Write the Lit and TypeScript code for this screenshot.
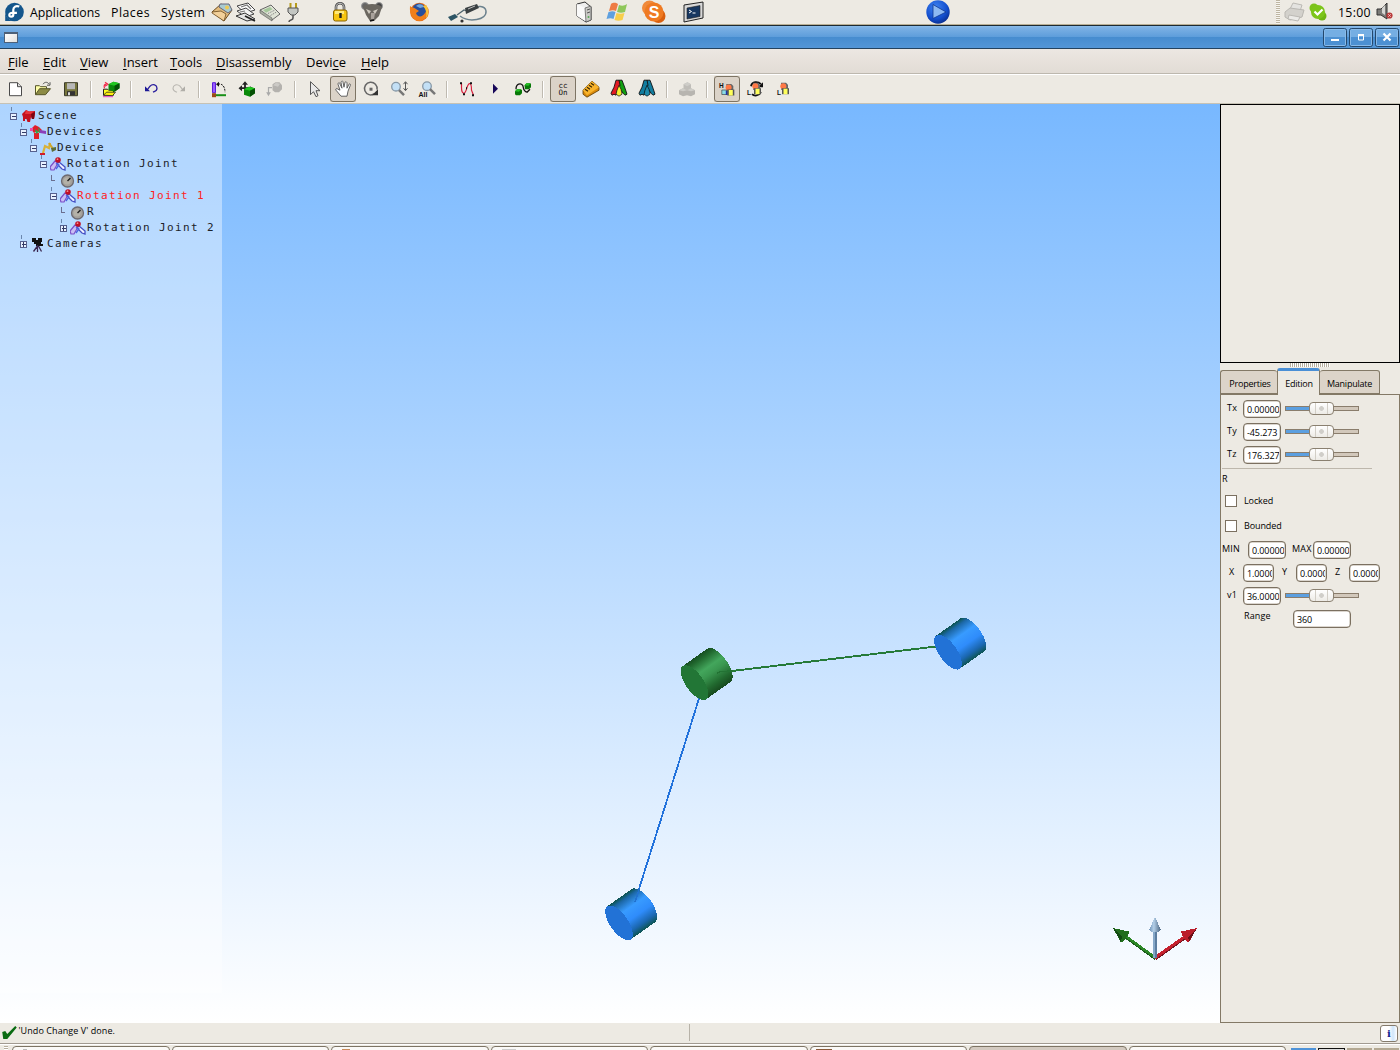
import { LitElement, html, css, svg } from "lit";
import { customElement } from "lit/decorators.js";
import { classMap } from "lit/directives/class-map.js";

/* ---------- desktop panel icons (drawn in 28x24 cells) ---------- */
const panelIcons: Record<string, any> = {
  fedora: svg`<circle cx="14.500" cy="12" r="9.300" fill="#14568c"/><path d="M5.200 21V12a9 9 0 0 0 9 9z" fill="#14568c"/><path d="M19.300 6.600c-3.300-1.500-6 .4-6 3.200v5c0 2.400-3.900 2.500-4 .2-.1-1.900 2-2.300 3.300-2.200h4.300" fill="none" stroke="#fff" stroke-width="2.200"/>`,
  mail: svg`<path d="M4 12l9-8 11 6-8 11z" fill="#e3bb7c" stroke="#6b4a1e"/><path d="M12 4l9 0 3 6-4 3-9-6z" fill="#a9cbd2" stroke="#667"/><path d="M4 12l9-1 5 3-2 7-12-8z" fill="#f2d09a" stroke="#6b4a1e" stroke-width=".8"/><circle cx="19" cy="7.500" r="2" fill="#eecb55"/>`,
  writer: svg`<path d="M5 6l11-3 7 7-10 3z" fill="#fff" stroke="#444"/><path d="M5 11l9-3 8 6-9 3z" fill="#f3f3f3" stroke="#444"/><path d="M4 16l9-3 10 6-8 2z" fill="#e5e5e5" stroke="#333"/><path d="M13 16l10 5" stroke="#222" stroke-width="1.800"/><path d="M9 7l6-2 4 4M8 12l5-1" fill="none" stroke="#777" stroke-width="1.200"/>`,
  calc: svg`<path d="M4 10l11-5 9 9-8 6z" fill="#dfe3d6" stroke="#666"/><path d="M4 10l12 8v3L4 13z" fill="#aaaea2" stroke="#555" stroke-width=".6"/><path d="M7 10l7-3 2.500 2.200-6.500 3.500z" fill="#a5c79b"/><path d="M12 13.500l7-3.500M14.500 15.500l6-3.500" stroke="#888" stroke-dasharray="1.500 1"/>`,
  plug: svg`<path d="M11.500 3v5M17 3v5" stroke="#b59a1c" stroke-width="2"/><path d="M9 8h10v4l-3 3h-4l-3-3z" fill="#c3c6c2" stroke="#555"/><path d="M14 15v3c0 3-4 1-4 4" fill="none" stroke="#555" stroke-width="1.600"/>`,
  lock: svg`<path d="M10 11V7c0-5 8-5 8 0v4" fill="none" stroke="#444" stroke-width="2.600"/><path d="M10 11V7c0-5 8-5 8 0v4" fill="none" stroke="#ddd" stroke-width=".9"/><rect x="7.500" y="10" width="13.500" height="11" rx="2" fill="#f7c512" stroke="#8a6400"/><path d="M9 11h9v3H9z" fill="#ffe97a"/><path d="M14.500 13v5" stroke="#222" stroke-width="2.400"/>`,
  gimp: svg`<circle cx="7" cy="6" r="3.500" fill="#666" stroke="#999"/><circle cx="21" cy="6" r="3.500" fill="#444" stroke="#999"/><path d="M5 7c3-4 15-4 19 0l-3 9-5 5h-4l-4-6z" fill="#6b6760"/><path d="M8 9l5 2-2 3zM20 9l-5 2 2 3z" fill="#cfcac0"/><path d="M13 13h4l-1 6h-3z" fill="#a9a29b"/><path d="M12 21l4-1" stroke="#111" stroke-width="1.500"/>`,
  firefox: svg`<circle cx="14.500" cy="12" r="9.300" fill="#e66a14"/><circle cx="14" cy="10.500" r="7" fill="#254f9d"/><path d="M11 6c3-3 7-2 8 1l-4 1z" fill="#70a5dd"/><path d="M5 6c2 2 4 1 6 3l3 2-3 2c1 4 6 5 9 0l3-3c0 7-4 11-9 11S4 15 5 6z" fill="#ef7f1b"/><path d="M21 5c3 4 3 10 0 13 1-5 0-9-3-12z" fill="#f7c43a"/>`,
  probe: svg`<path d="M12 16c9 7 27 4 26-5-1-6-9-5-13-3" fill="none" stroke="#6c828e" stroke-width="1.500"/><path d="M9 15l7-5 3 1" fill="none" stroke="#4c626c" stroke-width="1.300"/><path d="M0 17l7-3 3 3-7 4z" fill="#2d5565"/><path d="M17 8l12-4 2 4-13 6z" fill="#3a4042"/><path d="M20 9l7-3" stroke="#bbb"/><circle cx="14" cy="21" r="1.600" fill="#333"/>`,
  tower: svg`<path d="M7 4l8-2 6 5v13l-5 2-9-6z" fill="#eee" stroke="#333"/><path d="M15 8v13l-8-5V4z" fill="#fafafa"/><path d="M15 8l6-2v14l-5 2z" fill="#c9c9c6" stroke="#555" stroke-width=".7"/><path d="M17 10l3-1M17 13l3-1" stroke="#555"/><circle cx="18.500" cy="17" r="1" fill="#5a5"/>`,
  windows: svg`<path d="M8 4c3-2 5-1 7 0l-2 7c-2-1-4-1-7 0z" fill="#ee7b44"/><path d="M16 5c3 1 5 1 8-1l-2 8c-3 1-5 1-8 0z" fill="#8fc75a"/><path d="M5.500 12c3-1 5-1 7 0l-2 7c-2-1-4-1-7 0z" fill="#5fa0df"/><path d="M13.500 13c3 1 5 1 8 0l-2 7c-3 1-5 1-8 0z" fill="#f7ce4b"/>`,
  skype: svg`<circle cx="9.500" cy="8" r="7.500" fill="#f08a3c"/><circle cx="18.500" cy="16" r="7" fill="#d9600f"/><circle cx="14" cy="12" r="9.500" fill="#ef7a22"/><text x="14" y="18" text-anchor="middle" font-family="Liberation Sans" font-weight="bold" font-size="16" fill="#fff">S</text>`,
  terminal: svg`<path d="M5 5l19-3v16L5 22z" fill="#d8d8d8" stroke="#222"/><path d="M8 8l13-2.500v11L8 19z" fill="#173761" stroke="#222" stroke-width=".6"/><path d="M10 10l2.500 1.500L10 13M13.500 13h3" fill="none" stroke="#fff"/>`,
  play: svg`<defs><radialGradient id="pb" cx=".4" cy=".3" r=".8"><stop offset="0" stop-color="#3f83f0"/><stop offset=".6" stop-color="#1450cf"/><stop offset="1" stop-color="#08257c"/></radialGradient></defs><circle cx="14" cy="12" r="11.700" fill="url(#pb)"/><path d="M9 4.500l13 7.500-13 6.500z" fill="#8db9f2" stroke="#0e3690" stroke-width=".8"/>`,
  printer: svg`<path d="M9 9l3-6 9 2-2 6z" fill="#e4e3e0" stroke="#bbb9b4"/><path d="M4 12l5-4 14 2-2 7-12 3-5-3z" fill="#d3d1cc" stroke="#b9b7b2"/><path d="M8 15l11 2-2 4-10-2z" fill="#ebeae7" stroke="#bbb9b4"/>`,
  online: svg`<circle cx="10" cy="8" r="4.500" fill="#7cc21c"/><circle cx="18" cy="16" r="4.500" fill="#6fb513"/><circle cx="14" cy="12" r="7" fill="#7cc51a"/><path d="M10.500 11.500l3 3 5-5" fill="none" stroke="#fff" stroke-width="2.200"/>`,
  sound: svg`<path d="M5 9h4l6-6v16l-6-4H5z" fill="#7b7b78" stroke="#333"/><path d="M10 8l3-3v10l-3-2z" fill="#d5d5d2"/><circle cx="17.500" cy="15.500" r="3.100" fill="#b83a3a"/><path d="M16.300 14.300l2.400 2.400m0-2.400l-2.400 2.400" stroke="#f2caca" stroke-width="1"/>`,
};

/* ---------- application toolbar icons (28x28 cells) ---------- */
const cube = (x: number, y: number) => svg`<path d="M${x} ${y + 2.500}l5-2.500 6 1.500v5l-5 3.500-6-2z" fill="#0a8a0a"/><path d="M${x} ${y + 2.500}l5-2.500 6 1.500-5 2.500z" fill="#20c820"/><path d="M${x + 6} ${y + 4}l5-2.500v5l-5 3.500z" fill="#055005"/>`;
const tree3 = (a: string, b: string, c: string) => svg`<path d="M14 6h3l3 8 2 6-2 1-2-2-5-8z" fill="${b}" stroke="#111" stroke-width=".9"/><path d="M11 6h3l1 5-3 6-1 4-2-1-2 1-1-2 3-6z" fill="${a}" stroke="#111" stroke-width=".9"/><path d="M14 11l2 4 1 5-3 2-3-2 1-4z" fill="${c}" stroke="#111" stroke-width=".7"/>`;
const chips = svg`<path d="M12 8.500h5l2 2v5h-7z" fill="#666"/><circle cx="14.300" cy="12" r="3" fill="#ff7845"/><path d="M13 14h7v6h-7z" fill="#555"/><path d="M14.500 14.500h4v5.500h-4z" fill="#ffff5a"/>`;

const toolIcons: Record<string, any> = {
  new: svg`<path d="M8.500 8.500h8l4 4v9h-12z" fill="#fff" stroke="#4a4a4a"/><path d="M16.500 8.500v4h4" fill="#ddd" stroke="#4a4a4a"/>`,
  open: svg`<path d="M6.500 20.500v-9h4l1 1h6v2" fill="#ffffa8" stroke="#55552a"/><path d="M6.500 20.500l4-6h11l-5 6z" fill="#8c8b45" stroke="#55552a"/><path d="M14 10c2-3 5-2 6 0m1-2v3h-3" fill="none" stroke="#555"/>`,
  save: svg`<path d="M7.500 8.500h13v13h-13z" fill="#77763d" stroke="#3c3c2b"/><path d="M10 9h8v6h-8z" fill="#b8b8b8"/><path d="M10 17h8v4h-8z" fill="#333"/><path d="M11 18h2v3h-2z" fill="#ddd"/>`,
  import: svg`<path d="M6.500 21v-6h4l1 1h5v5z" fill="#ffff20" stroke="#222"/><path d="M6.500 21l3-3h9l-3 3.500z" fill="#ffee10" stroke="#222" stroke-width=".8"/><path d="M7.500 14c-1-3 0-4 2-4m-1.500-2l3 2-3 2" fill="none" stroke="#f22b4c" stroke-width="1.200"/>${cube(11.5, 7.5)}<path d="M6 22.500h10" stroke="#e13cc8"/>`,
  undo: svg`<path d="M10 16l3-4c3-3 7-1 7 2s-2 3-4 4" fill="none" stroke="#2a1e9d" stroke-width="1.300"/><path d="M8 12v5h5z" fill="#1c1896"/>`,
  redo: svg`<path d="M18 16l-3-4c-3-3-7-1-7 2s2 3 4 4" fill="none" stroke="#b9b7b1" stroke-width="1.100"/><path d="M20 12v5h-5z" fill="#b0aea8"/>`,
  joint: svg`<path d="M7.500 8.500h3v10h-3z" fill="#9a5cff" stroke="#5a1fd8"/><path d="M11 20h10v2H11z" fill="#189018"/><path d="M7 19h4v4H7z" fill="#9b4a18"/><path d="M13 10c4-1 7 2 7 8" fill="none" stroke="#111" stroke-dasharray="2 1"/><path d="M11 10l3-2.500v5z" fill="#111"/>`,
  move: svg`<path d="M12 9v11M7 14h11" stroke="#222" stroke-width="1.800"/><path d="M12 7l3 3.500H9zM5.500 14l3.500-3v6zM20 14l-3-2v3z" fill="#222"/>${cube(11, 12.500)}`,
  detach: svg`<path d="M11 13.500H7.500v6" fill="none" stroke="#aaa" stroke-width="1.200"/><path d="M7.500 22l-2.300-4h4.600z" fill="#aaa"/><path d="M11.500 10l3-2h4l2.500 3v4l-3 3h-4l-2.500-2z" fill="#b4b2ae"/><path d="M12 11l3-2.500 4 1-2 3z" fill="#cccac6"/>`,
  arrow: svg`<path d="M9.500 7.500v13l3-3 2.500 5 2-1-2-5h4z" fill="#e9e9e9" stroke="#555"/>`,
  hand: svg`<path d="M12 22l-5-6c-1-2 1-2 2-1l2 1-2-6c0-2 2-2 2 0l2 4-1-6c1-2 2-1 2 0l1 5 1-5c1-1 2 0 2 1v5l2-4c1-1 2 0 1 2l-2 5-1 5z" fill="#fff" stroke="#555" stroke-width=".9"/>`,
  rotate: svg`<path d="M17.500 19.500a6.300 6.300 0 1 1 2.500-4" fill="none" stroke="#666" stroke-width="1.500"/><path d="M21 15v6h-6z" fill="#333"/><path d="M12.500 13.500h3v3h-3z" fill="#666"/>`,
  zoom: svg`<circle cx="11" cy="12.500" r="4.300" fill="#c3e0f6" stroke="#8798a6" stroke-width="1.300"/><path d="M14 16l5 5" stroke="#777" stroke-width="2.500"/><path d="M20.500 8v8m-2-6l2-2.500 2 2.500m-4 4l2 2.500 2-2.500" fill="none" stroke="#555"/>`,
  zoomall: svg`<circle cx="14" cy="12" r="4.300" fill="#c3e0f6" stroke="#8798a6" stroke-width="1.300"/><path d="M17 15l5 5" stroke="#777" stroke-width="2.500"/><text x="5.500" y="23" font-family="Liberation Sans" font-weight="bold" font-size="7" fill="#111">All</text>`,
  curve: svg`<path d="M8.500 9v4c0 6 3 9 5 2s5-8 5 1l2 5" fill="none" stroke="#d81e3c" stroke-width="1.200"/><path d="M7 8h2v2H7zM10 19h2v2h-2zM17 8h2v2h-2zM19 20h2v2h-2zM13 13h1v2h-1z" fill="#111"/>`,
  playsmall: svg`<path d="M12 9.500l5 5-5 5z" fill="#170758"/>`,
  link: svg`<path d="M7 15c0-6 5-6 6.500-4s0 6 4.500 7l3-3" fill="none" stroke="#111" stroke-width="1.300"/><path d="M6 17l2-2h4l1 1v3l-2 2H7l-1-1zM15.500 11l2-2h4l.5 1v3l-2 2h-4z" fill="#087808"/><path d="M6 17l2-2h4l-2 2.500zM15.500 11l2-2h4l-2 2.500z" fill="#24c024"/>`,
  ccon: svg`<text x="14" y="13.500" text-anchor="middle" font-family="DejaVu Sans Mono" font-size="7.500" fill="#111">cc</text><text x="14" y="20.500" text-anchor="middle" font-family="DejaVu Sans Mono" font-size="7.500" fill="#111">On</text>`,
  ruler: svg`<path d="M6 16L15 7l7 6v3l-12 7-4-3z" fill="#d98a0c" stroke="#5b3b05" stroke-width=".8"/><path d="M6 16L15 7l7 6-12 8z" fill="#f9b42c"/><path d="M8 15l3 2m-1-4l3 2m-1-4l3 2m-1-4l3 2" stroke="#3a2600" stroke-width="1.200"/>`,
  treecolor: tree3("#e31b23", "#12a012", "#f6ef31"),
  treeblue: tree3("#127d9f", "#127d9f", "#1c8bac"),
  cubes: svg`<path d="M10.500 10l4-2 3.500 2v5l-4 2-3.500-2z" fill="#bfbdb8"/><path d="M6 16l4-2 4 2v5l-4 1-4-2zM14 16l4-2 4 2v4l-4 2-4-1z" fill="#b7b5b0"/><path d="M10.500 10l4-2 3.500 2-4 2zM6 16l4-2 4 2-4 1zM14 16l4-2 4 2-4 1z" fill="#cecdc8"/>`,
  high: svg`<text x="6" y="13.500" font-family="Liberation Sans" font-weight="bold" font-size="6.500" fill="#111">H</text><g transform="translate(1.300 1.300)"><path d="M7.500 14.500h5v4.500h-5z" fill="#8adbe6" stroke="#333" stroke-width=".6"/><path d="M11.500 15h2v4.500h-2z" fill="#2034a8"/>${chips}</g>`,
  refresh: svg`<path d="M10 12c1-5 7-5 10-2m0 8c-2 4-7 4-9 2" fill="none" stroke="#111" stroke-width="1.800"/><path d="M22 8v5h-5z" fill="#111"/>${chips}<text x="6" y="21" font-family="Liberation Sans" font-weight="bold" font-size="6.500" fill="#111">L</text>`,
  low: svg`${chips}<text x="8" y="21" font-family="Liberation Sans" font-weight="bold" font-size="6.500" fill="#111">L</text>`,
};

const tools: { id: string; on?: boolean }[][] = [
  [{ id: "new" }, { id: "open" }, { id: "save" }],
  [{ id: "import" }],
  [{ id: "undo" }, { id: "redo" }],
  [{ id: "joint" }, { id: "move" }, { id: "detach" }],
  [{ id: "arrow" }, { id: "hand", on: true }, { id: "rotate" }, { id: "zoom" }, { id: "zoomall" }],
  [{ id: "curve" }, { id: "playsmall" }, { id: "link" }],
  [{ id: "ccon", on: true }, { id: "ruler" }, { id: "treecolor" }, { id: "treeblue" }],
  [{ id: "cubes" }],
  [{ id: "high", on: true }, { id: "refresh" }, { id: "low" }],
];

/* ---------- scene tree ---------- */
const nodeIcons: Record<string, any> = {
  scene: svg`<path d="M1 6l4-4 3 1.500 6-.5v3l-1 5h-2l-1-2-1 5H6.500l-1-3H4v2H2V9z" fill="#c4101e"/><path d="M5 2l3 1.500 5-.5-3 3H4z" fill="#e8333a"/><path d="M10 6l4-2-1 7h-2z" fill="#7b0612"/>`,
  devices: svg`<path d="M1 5l4-4 4 2 3 3-2 3-3-2-3 2z" fill="#df1f2a"/><path d="M4 9h5v6H4z" fill="#df1f2a"/><path d="M5 5l4 3-3 2z" fill="#2fa54a"/><path d="M8 3l3 4-2 2z" fill="#3b9a4d"/><path d="M10 6l6 1v3l-6-1z" fill="#8b3fb9"/><path d="M0 4h3v3H0z" fill="#ef4ba5"/>`,
  device: svg`<path d="M3 13l2-7 4 2 1-5" fill="none" stroke="#d9b23a" stroke-width="2.200"/><path d="M9 3l4 6" stroke="#cfa72c" stroke-width="2.200"/><path d="M11 8l5-1v3l-4 2z" fill="#5c6e3a"/><path d="M0 13h5v2H0z" fill="#d21a28"/>`,
  rot: svg`<path d="M5 5L0 11l1 3 3 0 4-7z" fill="#c9bdf4" stroke="#7a50c8" stroke-width="1.200"/><path d="M9 6l6 5v3l-3-1-5-5z" fill="#eef0ff" stroke="#4550c4" stroke-width="1.300"/><path d="M6 7l3 2-3 4" fill="none" stroke="#4a62e0" stroke-width="1.300"/><circle cx="8" cy="4" r="2.800" fill="#c00f24"/><circle cx="7.500" cy="3.200" r=".9" fill="#f08a90"/>`,
  r: svg`<circle cx="7.500" cy="9" r="6" fill="#a3a09b" stroke="#6d6a70" stroke-width="1.300"/><circle cx="7" cy="9" r="3.500" fill="#b4b1a8"/><path d="M7.500 9l3-3" stroke="#222" stroke-width="1.500"/>`,
  cam: svg`<path d="M2 2h4v2h2V2h4v4h-1v2h2v2H6V8H4V6H2z" fill="#111"/><path d="M7.500 9v7M7.500 10l-4 5.500M8.500 10l3 5.500" stroke="#3a2650" stroke-width="1.300"/>`,
};
const nodes: { t: string; d: number; i: string; b: string; sel?: boolean }[] = [
  { t: "Scene", d: 0, i: "scene", b: "-" },
  { t: "Devices", d: 1, i: "devices", b: "-" },
  { t: "Device", d: 2, i: "device", b: "-" },
  { t: "Rotation Joint", d: 3, i: "rot", b: "-" },
  { t: "R", d: 4, i: "r", b: "" },
  { t: "Rotation Joint 1", d: 4, i: "rot", b: "-", sel: true },
  { t: "R", d: 5, i: "r", b: "" },
  { t: "Rotation Joint 2", d: 5, i: "rot", b: "+" },
  { t: "Cameras", d: 1, i: "cam", b: "+" },
];

const cylinder = (x: number, y: number, side: string, face: string) => svg`
  <g transform="translate(${x} ${y}) rotate(-35.3)">
    <path d="M0 -20.300L29.800 -20.300A8.900 20.300 0 0 1 29.800 20.300L0 20.300Z" fill="url(#${side})"/>
    <ellipse rx="8.900" ry="20.300" fill="${face}"/>
  </g>`;

@customElement("scene-view")
class SceneView extends LitElement {
  static styles = css`
    :host { display: block; width: 1220px; height: 919px; position: relative; overflow: hidden;
      background: linear-gradient(#78b8ff, #fff); }
    .space { display: block; }
    .tree { position: absolute; left: 0; top: 0; width: 222px; height: 889px; background: rgba(255,255,255,.4); padding-top: 4px; box-sizing: border-box; }
    .node { display: flex; height: 16px; color: #1c2228;
      font: 11px/16px "DejaVu Sans Mono", monospace; letter-spacing: 1.38px; white-space: pre; }
    .node.sel { color: #f22; }
    .exp { flex: none; width: 12px; height: 18px; margin-top: -1px; }
    .ico { flex: none; width: 16px; height: 18px; margin: -1px 1px 0 0; }
  `;
  render() {
    return html`
      <svg class="space" width="1220" height="919" viewBox="0 104 1220 919">
        <defs>
          <linearGradient id="gs" x1="0" y1="0" x2="0" y2="1"><stop offset="0" stop-color="#174f22"/><stop offset=".12" stop-color="#21692f"/><stop offset=".38" stop-color="#43a65c"/><stop offset=".55" stop-color="#3a9750"/><stop offset=".8" stop-color="#226b30"/><stop offset="1" stop-color="#174a1e"/></linearGradient>
          <linearGradient id="bs" x1="0" y1="0" x2="0" y2="1"><stop offset="0" stop-color="#0d544f"/><stop offset=".11" stop-color="#1c68a8"/><stop offset=".34" stop-color="#389bff"/><stop offset=".6" stop-color="#2f8cfb"/><stop offset=".84" stop-color="#1b67b0"/><stop offset="1" stop-color="#0d5554"/></linearGradient>
          <linearGradient id="cone" x1="0" x2="1"><stop offset="0" stop-color="#6d91b5"/><stop offset=".4" stop-color="#b3cfe8"/><stop offset="1" stop-color="#47627e"/></linearGradient>
        </defs>
        <g shape-rendering="crispEdges">
          <path d="M699.500 697L639 889" stroke="#2272dc" stroke-width="1.800"/>
          <path d="M732 671L936 646.500" stroke="#257a38" stroke-width="1.900"/>
          ${cylinder(694.5, 682.6, "gs", "#227636")}
          ${cylinder(948, 652.2, "bs", "#2272d6")}
          ${cylinder(619, 922.9, "bs", "#2272d6")}
          <path d="M639.500 888L635 902" stroke="#2272d0" stroke-width="1.500"/>
          <path d="M717 673l4-1.500 12-.5" fill="none" stroke="#237334" stroke-width="1.500"/>
          <path d="M1155 958L1126 937" stroke="#2b8726" stroke-width="3.500"/>
          <path d="M1155 959.500L1126 938.500" stroke="#1a5a1a" stroke-width="1"/>
          <path d="M1113 928l16 3.500-1 4-5 6.500-2.500-.5z" fill="#216d1c"/>
          <path d="M1113 928l9 9-1 4.500z" fill="#124a12"/>
          <path d="M1155 958L1185 937" stroke="#c5202e" stroke-width="3.500"/>
          <path d="M1156 959.500L1185 939" stroke="#711520" stroke-width="1"/>
          <path d="M1197 928l-16 3.500 1 4 5 6.500 2.500-.5z" fill="#bb1d2b"/>
          <path d="M1197 928l-9 9 1 4.500z" fill="#6c1018"/>
          <path d="M1153 931h4v27h-4z" fill="#5b7da0"/>
          <path d="M1153 931h1.500v27h-1.500z" fill="#86a8c9"/>
          <path d="M1155 917l6 13c-3 3-9 3-12 0z" fill="url(#cone)"/>
        </g>
      </svg>
      <div class="tree">
        ${nodes.map(n => html`<div class=${classMap({ node: true, sel: !!n.sel })} style="padding-left:${(n.d ? 8 : 9) + n.d * 10}px">
          <svg class="exp" viewBox=${n.d ? "-1 0 12 18" : "0 0 12 18"}><g shape-rendering="crispEdges">
            ${n.b ? svg`<path d="M2.500 0v4" stroke="#6a86ad"/><rect x="1.500" y="6.500" width="6" height="6" fill="#e8f1ff" stroke="#56618f"/><path d="M3 9.500h4" stroke="#333a66"/>${n.b === "+" ? svg`<path d="M4.500 7v5" stroke="#333a66"/>` : ""}` : svg`<path d="M2.500 4v5h3" fill="none" stroke="#6a6f90"/>`}
          </g></svg>
          <svg class="ico" viewBox="0 0 16 18"><g transform="translate(0 1)">${nodeIcons[n.i]}</g></svg>${n.t}</div>`)}
      </div>`;
  }
}

@customElement("edit-panel")
class EditPanel extends LitElement {
  static styles = css`
    :host { display: flex; flex-direction: column; width: 180px; height: 919px; background: #edeae3; color: #000;
      font: 9px/12px "Open Sans", sans-serif; }
    .preview { height: 259px; box-sizing: border-box; border: 1px solid #000; flex: none; }
    .grip { width: 40px; height: 4px; margin: 0 0 0 70px; background: repeating-linear-gradient(90deg, #b5ae9f 0 1px, #fff 1px 2px); flex: none; }
    .tabs { display: flex; align-items: flex-end; height: 27px; flex: none; box-sizing: border-box; letter-spacing: -.22px; }
    .tab { box-sizing: border-box; height: 24px; border: 1px solid #837966; border-radius: 3px 3px 0 0; background: #dcd4c9; display: flex; align-items: center; justify-content: center; padding-top: 3px; }
    .tab.p { width: 57px; border-right: 0; padding-left: 2px; }
    .tab.m { width: 60px; border-left: 0; }
    .tab.on { width: 43px; height: 27px; background: #edeae3; border-top: 3px solid #4a8fd6; border-bottom: 0; margin-bottom: -1px; z-index: 1; padding: 1px 0 0 1px; }
    .body { flex: 1; border: 1px solid #837966; box-sizing: border-box; padding-top: 2px; }
    .row { display: flex; height: 23px; }
    .lab { box-sizing: border-box; white-space: nowrap; padding-top: 5px; flex: none; }
    .c6 { width: 22px; padding-left: 6px; letter-spacing: .3px; }
    .min { width: 27px; padding-left: 1px; letter-spacing: .2px; }
    .max { width: 27px; padding-left: 6px; letter-spacing: .2px; }
    .x { width: 22px; padding-left: 8px; }
    .y { width: 22px; padding-left: 8px; }
    .rng { width: 72px; padding: 3px 0 0 23px; letter-spacing: .15px; }
    .f { box-sizing: border-box; height: 18px; margin-top: 3px; border: 1px solid #7b7060; box-shadow: inset 0 0 0 .5px #b7ae9f; border-radius: 4px; background: #fff; padding: 3px 1px 0 3px; flex: none; overflow: hidden; }
    .t { overflow: hidden; white-space: nowrap; letter-spacing: -.1px; }
    .w38 { width: 38px; } .w31 { width: 31px; } .w58 { width: 58px; }
    .slider { position: relative; width: 74px; height: 5px; margin: 9px 0 0 4px; box-sizing: border-box; border: 1px solid #8a7d6c; background: linear-gradient(90deg, #5b9fe0 50%, #d2c8bb 50%); }
    .knob { position: absolute; left: 23px; top: -5px; width: 25px; height: 13px; box-sizing: border-box; border: 1px solid #8a8070; border-radius: 4px; background: linear-gradient(#fff, #edebe6); display: flex; align-items: center; justify-content: center; }
    .knob::before { content: ""; width: 11px; height: 11px; border: solid #d2cec6; border-width: 0 1px; background: radial-gradient(circle, #d0cec9 0 2px, transparent 2.700px); }
    .rule { height: 1px; width: 150px; margin: 2px 0 0 1px; background: #bdb7ac; }
    .r { padding: 4px 0 0 1px; height: 19px; box-sizing: border-box; }
    .chk { display: flex; align-items: center; height: 25px; }
    .chk span { padding-top: 1px; letter-spacing: -.1px; }
    .box { width: 12px; height: 12px; box-sizing: border-box; border: 1px solid #7b7060; background: #fff; margin: 0 7px 0 4px; }
  `;
  private field(v: string, w: string) { return html`<div class="f ${w}"><div class="t">${v}</div></div>`; }
  private axis(l: string, v: string) {
    return html`<div class="row"><div class="lab c6">${l}</div>${this.field(v, "w38")}<div class="slider"><div class="knob"></div></div></div>`;
  }
  render() {
    return html`
      <div class="preview"></div>
      <div class="grip"></div>
      <div class="tabs"><div class="tab p">Properties</div><div class="tab on">Edition</div><div class="tab m">Manipulate</div></div>
      <div class="body">
        ${this.axis("Tx", "0.00000")}${this.axis("Ty", "-45.273")}${this.axis("Tz", "176.327")}
        <div class="rule"></div>
        <div class="r">R</div>
        <div class="chk"><div class="box"></div><span>Locked</span></div>
        <div class="chk"><div class="box"></div><span>Bounded</span></div>
        <div class="row"><div class="lab min">MIN</div>${this.field("0.00000", "w38")}<div class="lab max">MAX</div>${this.field("0.00000", "w38")}</div>
        <div class="row"><div class="lab x">X</div>${this.field("1.0000", "w31")}<div class="lab y">Y</div>${this.field("0.0000", "w31")}<div class="lab y">Z</div>${this.field("0.0000", "w31")}</div>
        ${this.axis("v1", "36.0000")}
        <div class="row"><div class="lab rng">Range</div>${this.field("360", "w58")}</div>
      </div>`;
  }
}

@customElement("app-root")
class AppRoot extends LitElement {
  static styles = css`
    :host { display: flex; flex-direction: column; width: 1400px; height: 1050px; overflow: hidden; background: #edeae3; color: #000;
      font: 13px/16px "Open Sans", sans-serif; }
    .panel { display: flex; align-items: center; height: 26px; box-sizing: border-box; border-bottom: 1px solid #1c2a33; box-shadow: inset 0 -1px #b8af95; padding-bottom: 2px; flex: none; font-size: 12.300px; }
    .panel svg { width: 28px; height: 24px; flex: none; display: block; }
    .panel .wide { width: 40px; }
    .pt { white-space: nowrap; padding-top: 3px; }
    .apps { width: 81px; margin-left: 2px; } .places { width: 50px; letter-spacing: .5px; } .system { width: 47px; letter-spacing: .5px; }
    .g1 { display: flex; }
    .g1 svg { margin-right: -4.200px; }
    .lock { margin-left: 22.800px; } .gimp { margin-left: 4px; } .fire { margin-left: 19px; } .probe { margin-left: 15px; }
    .tower { margin-left: 82px; } .win { margin-left: 5px; } .sky { margin-left: 9px; } .term { margin-left: 11px; } .play { margin-left: 217px; }
    .tray { margin-left: auto; display: flex; align-items: center; }
    .dots { width: 4px; height: 24px; background: repeating-linear-gradient(#bdb5a2 0 1px, #f6f4ef 1px 2px); margin-right: 1px; }
    .tray svg + svg { margin-left: -5px; }
    .clock { width: 34px; margin: 0 0 0 6px; letter-spacing: .3px; }
    .title { display: flex; align-items: center; height: 23px; box-sizing: border-box; flex: none; border-bottom: 1px solid #24435f;
      background: linear-gradient(#8cbdea 0, #7bb0e4 2px, #5d9ddb 11px, #468ccf 11px, #5396d7 100%); }
    .win-ico { width: 14px; height: 11px; box-sizing: border-box; border: 1px solid #4d6078; border-top-width: 2px; background: linear-gradient(135deg, #fff, #e3e0dc); margin-left: 4px; }
    .btns { margin-left: auto; display: flex; gap: 2px; padding-right: 1px; }
    .btns svg { width: 24px; height: 19px; display: block; }
    .menu { display: grid; grid-template-columns: 35px 37px 43px 47px 46px 90px 55px 40px; align-items: center; height: 25px; box-sizing: border-box; padding: 1px 0 0 8px; background: linear-gradient(#ece7e2, #e2dcd5); border-bottom: 1px solid #bdb8ae; flex: none; }
    .menu span { white-space: nowrap; letter-spacing: -.02px; }
    u { text-underline-offset: 2px; text-decoration-thickness: 1px; }
    .tools { display: flex; height: 30px; box-sizing: border-box; padding: 0 0 0 1px; border-top: 1px solid #fff; border-bottom: 1px solid #c6c2b5; flex: none; }
    .grp { display: flex; align-items: center; }
    .grp + .grp::before { content: ""; width: 1px; height: 17px; margin: 0 5px; background: #bfbab0; border-right: 1px solid #fff; }
    .tool { width: 28px; height: 28px; padding: 1px; box-sizing: border-box; }
    .tool svg { width: 26px; height: 26px; display: block; box-sizing: border-box; overflow: visible; }
    .tool.on { background: #dbd3c8; background-clip: content-box; }
    .tool.on svg { outline: 1px solid #7d7464; outline-offset: -1px; border-radius: 3px; }
    .main { display: flex; flex: none; height: 919px; }
    .status { display: flex; height: 21px; box-sizing: border-box; border-bottom: 1px solid #a19a91; flex: none; font-size: 9px; line-height: 14px; letter-spacing: .08px; }
    .status svg { width: 18.500px; height: 18px; flex: none; }
    .msg { width: 671px; box-sizing: border-box; margin: 1px 0; height: 17px; border-right: 1px solid #b7b2a8; }
    .info { margin: 2px 2px 0 auto; width: 18px; height: 17px; box-sizing: border-box; border: 1px solid #857b6c; border-radius: 3px; background: linear-gradient(90deg, #fff 50%, #cfe6fb 75%, #fff); text-align: center; font: bold 10px/16px "DejaVu Serif", serif; color: #12238e; }
    .task { display: flex; gap: 2px; flex: none; height: 6px; padding: 1px 1px 0 0; border-top: 1px solid #fff; overflow: hidden; box-sizing: border-box; }
    .handle { width: 4px; margin: 0 2px 0 4px; background: repeating-linear-gradient(#b5ad9d 0 1px, #fff 1px 2px); }
    .tb { flex: 1; height: 20px; box-sizing: border-box; border: 1px solid #7d7464; border-radius: 4px; background: #faf9f7; padding-left: 9px; }
    .tb.on { background: #d3cac0; }
    .bit { width: 4px; height: 2px; margin: 2px 0 0 1px; }
    .bit.gray { background: #bbb; } .bit.page { background: #ccc; width: 14px; } .bit.brown { background: #c98a5a; width: 8px; } .bit.dark { background: #8a5a3a; width: 16px; margin-left: -4px; } .bit.none { background: none; }
    .pager { display: flex; gap: 2px; width: 108px; padding: 2px 0 0 3px; }
    .ws { flex: 1; height: 10px; background: #b3a892; }
    .ws.cur { background: #4f93d8; }
    .ws.sel { background: #ddd; border: 1px solid #111; box-sizing: border-box; }
  `;
  private pi(id: string, cls = "") { return html`<svg class=${cls} viewBox="0 0 ${cls.includes("wide") ? 40 : 28} 24">${panelIcons[id]}</svg>`; }
  private wb(shape: any) {
    return html`<svg viewBox="0 0 24 19"><rect x=".5" y=".5" width="23" height="18" rx="2" fill="#4c90d2" stroke="#24486d"/><rect x="1.500" y="1.500" width="21" height="16" rx="1" fill="none" stroke="#9cc8f0" stroke-opacity=".75"/><path d="M2 2h20v7H2z" fill="#75aee3"/>${shape}</svg>`;
  }
  render() {
    const bits = ["gray", "none", "brown", "page", "none", "dark", "none", "none"];
    return html`
      <div class="panel">
        ${this.pi("fedora")}<span class="pt apps">Applications</span><span class="pt places">Places</span><span class="pt system">System</span>
        <div class="g1">${["mail", "writer", "calc", "plug"].map(i => this.pi(i))}</div>
        ${this.pi("lock", "lock")}${this.pi("gimp", "gimp")}${this.pi("firefox", "fire")}${this.pi("probe", "probe wide")}
        ${this.pi("tower", "tower")}${this.pi("windows", "win")}${this.pi("skype", "sky")}${this.pi("terminal", "term")}${this.pi("play", "play")}
        <div class="tray"><div class="dots"></div>${this.pi("printer")}${this.pi("online")}<span class="pt clock">15:00</span>${this.pi("sound")}</div>
      </div>
      <div class="title"><div class="win-ico"></div>
        <div class="btns">
          ${this.wb(svg`<path d="M8 11h8v2H8z" fill="#fff"/>`)}
          ${this.wb(svg`<path d="M9.500 7h5v5h-5z" fill="none" stroke="#fff"/><path d="M9 6h6v2H9z" fill="#fff"/>`)}
          ${this.wb(svg`<path d="M8.500 5.500l7 7m0-7l-7 7" stroke="#fff" stroke-width="2.200"/>`)}
        </div>
      </div>
      <div class="menu">
        <span><u>F</u>ile</span><span><u>E</u>dit</span><span><u>V</u>iew</span><span><u>I</u>nsert</span><span><u>T</u>ools</span><span><u>D</u>isassembly</span><span>Devi<u>c</u>e</span><span><u>H</u>elp</span>
      </div>
      <div class="tools">${tools.map(g => html`<div class="grp">${g.map(t => html`<div class=${classMap({ tool: true, on: !!t.on })}><svg viewBox="1 1.800 26 26">${toolIcons[t.id]}</svg></div>`)}</div>`)}</div>
      <div class="main"><scene-view></scene-view><edit-panel></edit-panel></div>
      <div class="status"><svg viewBox="0 0 18 18"><path d="M2 9l3-1 2 3 8-8 1.500 1.500L7 16H3z" fill="#0a6b12"/></svg><div class="msg">'Undo Change V' done.</div><div class="info">i</div></div>
      <div class="task"><div class="handle"></div>
        ${bits.map((b, i) => html`<div class=${classMap({ tb: true, on: i === 6 })}><div class="bit ${b}"></div></div>`)}
        <div class="pager"><div class="ws cur"></div><div class="ws sel"></div><div class="ws"></div><div class="ws"></div></div>
      </div>`;
  }
}
